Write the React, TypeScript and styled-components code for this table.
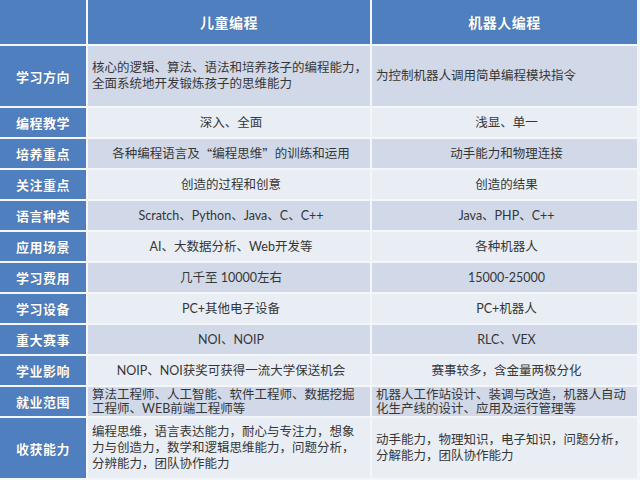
import React from 'react'
import styled, { createGlobalStyle } from 'styled-components'

const GlobalStyle = createGlobalStyle`
    html, body {
        margin: 0;
        padding: 0;
        background: #f4f6fa;
    }
    body {
        font-family: "Noto Sans CJK SC", "Noto Sans", sans-serif;
    }
`

const Table = styled.div`
    display: grid;
    grid-template-columns: 86px 282px 265px;
    grid-template-rows: 44px 60px repeat(10, 29px) 60px;
    gap: 2px;
    width: 640px;
    height: 480px;
    box-sizing: border-box;
    padding: 0 3px 2px 0;
    background: #f4f6fa;
    overflow: hidden;
`

const Head = styled.div`
    display: flex;
    align-items: center;
    justify-content: center;
    background: #4f7fbf;
    color: #ffffff;
    font-size: 14px;
    font-weight: 700;
    letter-spacing: 0.5px;
    text-shadow: 0 0 1px rgba(0, 0, 0, 0.25);
`

const Label = styled.div`
    display: flex;
    align-items: center;
    justify-content: center;
    background: #4f7fbf;
    color: #ffffff;
    font-size: 13px;
    font-weight: 700;
    letter-spacing: 0.5px;
    text-shadow: 0 0 1px rgba(0, 0, 0, 0.3);
`

const Cell = styled.div<{ $dark: boolean; $left?: boolean; $tight?: boolean }>`
    display: flex;
    align-items: center;
    justify-content: ${p => (p.$left ? 'flex-start' : 'center')};
    text-align: ${p => (p.$left ? 'left' : 'center')};
    padding: 0 0 0 4px;
    white-space: pre-line;
    background: ${p => (p.$dark ? '#d1d9e8' : '#e9edf4')};
    color: #363636;
    font-family: Lato, "Noto Sans CJK SC", sans-serif;
    font-size: 12.5px;
    line-height: ${p => (p.$tight ? '14px' : '16px')};
`

const Quote = styled.span`
    font-family: "Noto Sans CJK SC", sans-serif;
`

interface Row {
    label: string
    kid: React.ReactNode
    robot: React.ReactNode
    left?: boolean
    tight?: boolean
}

const rows: Row[] = [
    {
        label: '学习方向',
        kid: '核心的逻辑、算法、语法和培养孩子的编程能力，\n全面系统地开发锻炼孩子的思维能力',
        robot: '为控制机器人调用简单编程模块指令',
        left: true,
    },
    { label: '编程教学', kid: '深入、全面', robot: '浅显、单一' },
    {
        label: '培养重点',
        kid: (
            <>
                各种编程语言及<Quote>“</Quote>编程思维<Quote>”</Quote>的训练和运用
            </>
        ),
        robot: '动手能力和物理连接',
    },
    { label: '关注重点', kid: '创造的过程和创意', robot: '创造的结果' },
    { label: '语言种类', kid: 'Scratch、Python、Java、C、C++', robot: 'Java、PHP、C++' },
    { label: '应用场景', kid: 'AI、大数据分析、Web开发等', robot: '各种机器人' },
    { label: '学习费用', kid: '几千至 10000左右', robot: '15000-25000' },
    { label: '学习设备', kid: 'PC+其他电子设备', robot: 'PC+机器人' },
    { label: '重大赛事', kid: 'NOI、NOIP', robot: 'RLC、VEX' },
    { label: '学业影响', kid: 'NOIP、NOI获奖可获得一流大学保送机会', robot: '赛事较多，含金量两极分化' },
    {
        label: '就业范围',
        kid: '算法工程师、人工智能、软件工程师、数据挖掘\n工程师、WEB前端工程师等',
        robot: '机器人工作站设计、装调与改造，机器人自动\n化生产线的设计、应用及运行管理等',
        left: true,
        tight: true,
    },
    {
        label: '收获能力',
        kid: '编程思维，语言表达能力，耐心与专注力，想象\n力与创造力，数学和逻辑思维能力，问题分析，\n分辨能力，团队协作能力',
        robot: '动手能力，物理知识，电子知识，问题分析，\n分解能力，团队协作能力',
        left: true,
    },
]

export default function App() {
    return (
        <>
            <GlobalStyle />
            <Table>
                <Head />
                <Head>儿童编程</Head>
                <Head>机器人编程</Head>
                {rows.map((r, i) => {
                    const dark = i % 2 === 0
                    return (
                        <React.Fragment key={r.label}>
                            <Label>{r.label}</Label>
                            <Cell $dark={dark} $left={r.left} $tight={r.tight}>
                                {r.kid}
                            </Cell>
                            <Cell $dark={dark} $left={r.left} $tight={r.tight}>
                                {r.robot}
                            </Cell>
                        </React.Fragment>
                    )
                })}
            </Table>
        </>
    )
}
